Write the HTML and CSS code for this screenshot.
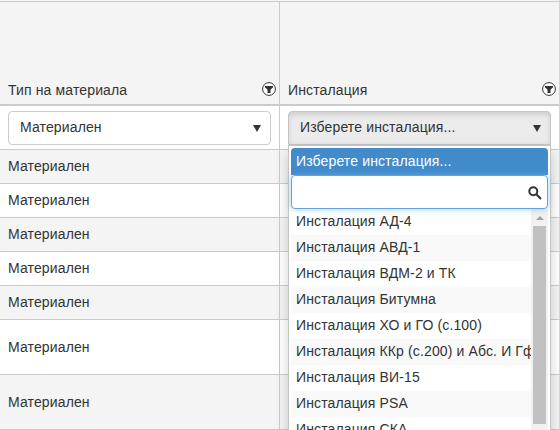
FILE: index.html
```html
<!DOCTYPE html>
<html lang="bg">
<head>
<meta charset="utf-8">
<title>Материали</title>
<link rel="stylesheet" href="styles.css">
</head>
<body>
<div class="grid">
  <div class="row head">
    <div class="cell"><span class="label">Тип на материала</span>
      <svg class="filter" viewBox="0 0 14 14"><circle cx="7" cy="7" r="6.4"/><path d="M3 4h8v1.4L8.5 7.6V11h-3V7.6L3 5.4z"/></svg></div>
    <div class="cell"><span class="label">Инсталация</span>
      <svg class="filter" viewBox="0 0 14 14"><circle cx="7" cy="7" r="6.4"/><path d="M3 4h8v1.4L8.5 7.6V11h-3V7.6L3 5.4z"/></svg></div>
  </div>
  <div class="row filters">
    <div class="cell"><div class="select"><span>Материален</span><i class="arrow"></i></div></div>
    <div class="cell">
      <div class="select open"><span>Изберете инсталация...</span><i class="arrow"></i></div>
      <div class="menu">
        <div class="chosen">Изберете инсталация...</div>
        <div class="search"><svg viewBox="0 0 14 14"><circle cx="5.3" cy="5.3" r="4"/><path d="M8.3 8.3l4.7 4.7"/></svg></div>
        <div class="list">
          <ul class="options">
            <li>Инсталация АД-4</li>
            <li>Инсталация АВД-1</li>
            <li>Инсталация ВДМ-2 и ТК</li>
            <li>Инсталация Битумна</li>
            <li>Инсталация ХО и ГО (с.100)</li>
            <li>Инсталация ККр (с.200) и Абс. И Гф</li>
            <li>Инсталация ВИ-15</li>
            <li>Инсталация PSA</li>
            <li>Инсталация СКА</li>
          </ul>
          <div class="scrollbar"><i class="up"></i><div class="thumb"></div></div>
        </div>
      </div>
    </div>
  </div>
  <div class="row odd"><div class="cell">Материален</div><div class="cell"></div></div>
  <div class="row"><div class="cell">Материален</div><div class="cell"></div></div>
  <div class="row odd"><div class="cell">Материален</div><div class="cell"></div></div>
  <div class="row"><div class="cell">Материален</div><div class="cell"></div></div>
  <div class="row odd"><div class="cell">Материален</div><div class="cell"></div></div>
  <div class="row tall"><div class="cell">Материален</div><div class="cell"></div></div>
  <div class="row odd tall"><div class="cell">Материален</div><div class="cell"></div></div>
</div>
</body>
</html>
```
FILE: styles.css
```css
* { box-sizing: border-box; }
body {
  margin: 0;
  height: 430px;
  overflow: hidden;
  background: #f4f4f4;
  color: #333;
  font: 14px/20px "Liberation Sans", Arial, sans-serif;
  letter-spacing: .13px;
}
.grid { margin-top: 1px; border-top: 1px solid #cbcbcb; }
.row {
  display: grid;
  grid-template-columns: 280px 280px;
  height: 34px;
  border-bottom: 1px solid #cbcbcb;
  background: #fff;
}
.row.odd { background: #f4f4f4; }
.cell {
  position: relative;
  display: flex;
  align-items: center;
  padding: 0 8px 1px;
  border-right: 1px solid #cbcbcb;
}
.row.tall { height: 55px; }
.tall .cell { padding-bottom: 0; }
.row.head { height: 104px; border-bottom-width: 2px; background: #f4f4f4; }
.head .cell { align-items: flex-end; justify-content: space-between; padding: 0 3px 4px 8px; }
.filter { width: 14px; height: 14px; margin-bottom: 4px; fill: #333; }
.filter circle { fill: #fff; stroke: #333; stroke-width: 1; }
.row.filters { height: 44px; }
.filters .cell { padding-bottom: 0; }
.select {
  display: flex;
  align-items: center;
  justify-content: space-between;
  width: 263px;
  height: 34px;
  flex: none;
  padding: 0 9px 2px 11px;
  border: 1px solid #ccc;
  border-radius: 4px;
  background: #fff;
}
.select.open {
  background: #ebebeb;
  border-color: #c4c4c4;
  border-radius: 4px 4px 0 0;
  box-shadow: inset 0 3px 5px rgba(0, 0, 0, .125);
}
.arrow {
  margin-top: 3px;
  border: solid transparent;
  border-width: 7px 4px 0;
  border-top-color: #333;
}
.menu {
  position: absolute;
  z-index: 2;
  top: 39px;
  left: 8px;
  width: 263px;
  height: 300px;
  padding: 2px;
  border: 1px solid #c4c4c4;
  background: #fff;
  box-shadow: 0 6px 12px rgba(0, 0, 0, .175);
}
.chosen {
  height: 27px;
  padding: 3px 5px;
  border-radius: 4px 4px 0 0;
  background: #428bca;
  color: #fff;
}
.search {
  position: relative;
  display: flex;
  align-items: center;
  justify-content: flex-end;
  height: 34px;
  padding: 1px 5px 0 0;
  border: 1px solid #66a3dc;
  border-radius: 4px;
  background: #fff;
  box-shadow: 0 0 7px rgba(102, 175, 233, .6);
}
.search svg { width: 14px; height: 14px; fill: none; stroke: #333; stroke-width: 2; }
.list { display: flex; height: 240px; }
.options { flex: 1; min-width: 0; margin: 0; padding: 0; list-style: none; }
.options li { height: 26px; padding: 2px 0 4px 5px; overflow: hidden; white-space: nowrap; }
.options li:nth-child(even) { background: #f9f9f9; }
.scrollbar { flex: none; width: 17px; padding: 7px 2px 0; background: #f1f1f1; }
.up {
  display: block;
  width: 8px;
  margin: 0 auto 6px;
  border: solid transparent;
  border-width: 0 4px 4px;
  border-bottom-color: #a0a0a0;
}
.thumb { height: 198px; background: #c1c1c1; }
```
